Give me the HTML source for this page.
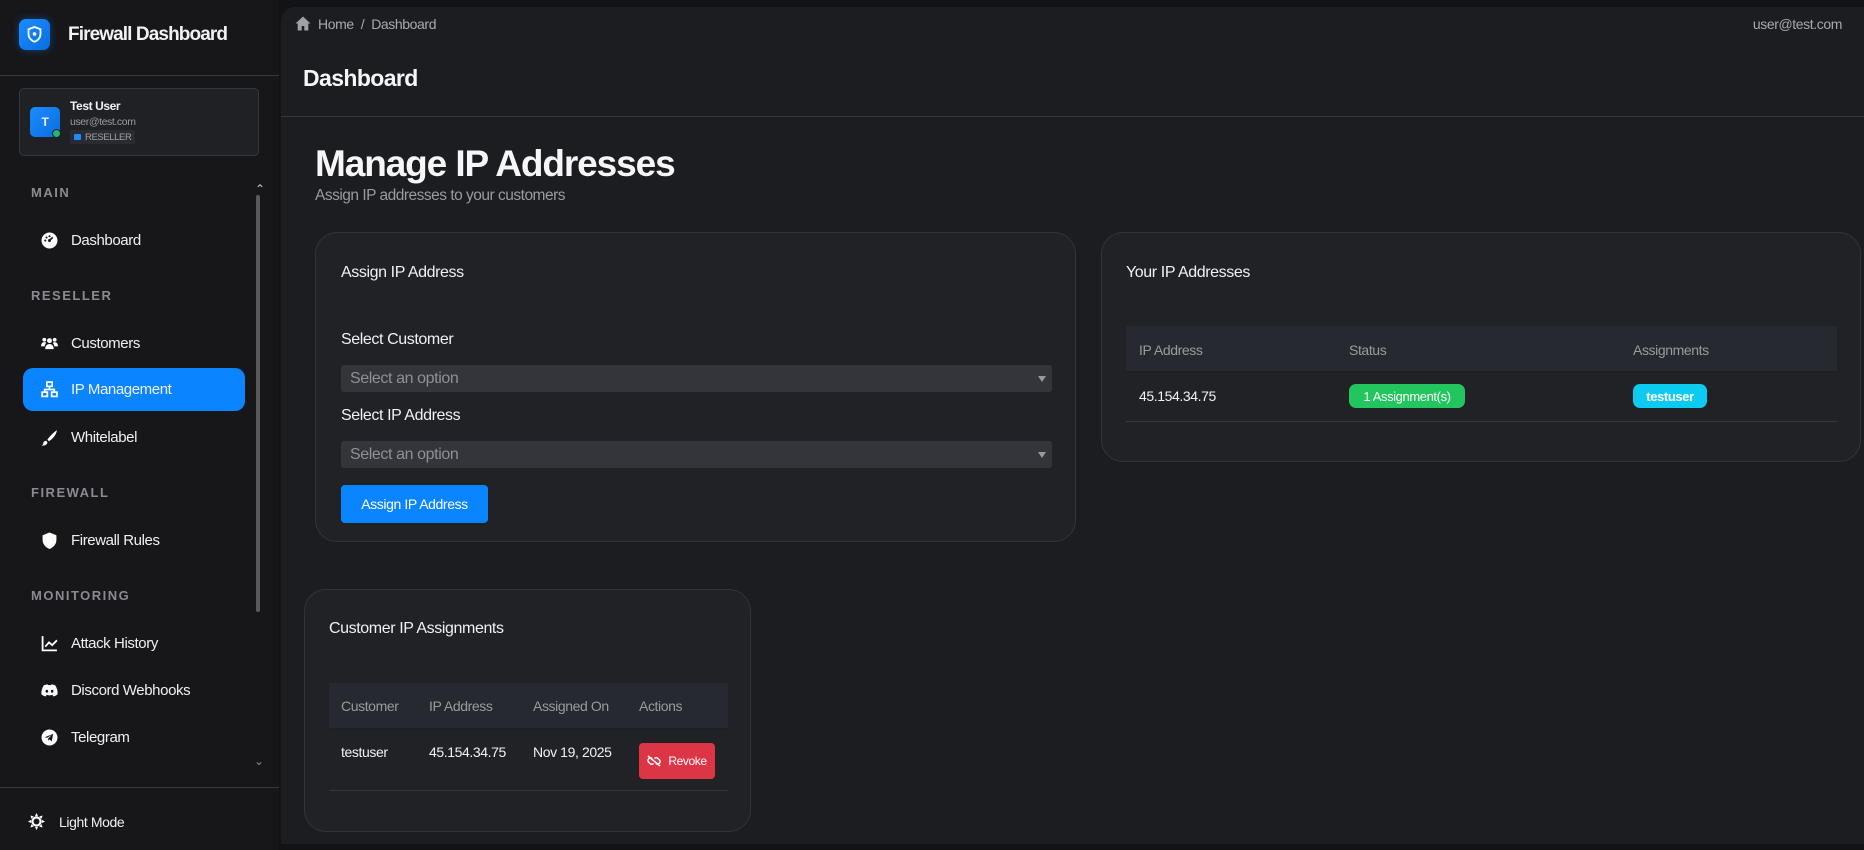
<!DOCTYPE html>
<html><head><meta charset="utf-8"><style>
*{box-sizing:border-box;margin:0;padding:0}
body{width:1864px;height:850px;background:#131316;font-family:"Liberation Sans",sans-serif;color:#f1f1f3;position:relative;overflow:hidden;letter-spacing:-0.4px}
.a{position:absolute}
#side{left:0;top:0;width:279px;height:850px;background:#17171a}
.sep{height:1px;background:#36373c}
.lbl{left:31px;font-size:13px;font-weight:700;letter-spacing:1.5px;color:#8a8a90}
.nav{left:23px;width:222px;height:43px;display:flex;align-items:center;font-size:15px;color:#f0f0f2}
.nav svg{margin-left:18px;margin-right:13px;width:17px;height:17px}
#main{left:281px;top:7px;width:1583px;height:837px;background:#1c1d21;border-radius:14px 0 0 0}
.card{background:#212226;border:1px solid #33343a;border-radius:22px}
.sel{background:#34353b;border-radius:3px;font-size:16px;color:#8f8f95;padding-left:9px;display:flex;align-items:center}
.sel:after{content:"";position:absolute;right:6px;top:11px;border:4px solid transparent;border-top:6px solid #999}
.th{background:#272931;border-bottom:2px solid #1f2024}
.hd{font-size:14px;color:#9a9aa0}
.td{font-size:14px;color:#f1f1f3}
</style></head><body>
<div id="side" class="a">
  <div class="a" style="left:19px;top:19px;width:31px;height:31px;border-radius:7px;background:linear-gradient(135deg,#1a8cff,#0a6ee0);box-shadow:0 0 8px rgba(10,132,255,.4)">
    <svg width="31" height="31" viewBox="0 0 31 31"><path d="M15.5 8l6 2.3v4.5c0 4-2.6 6.8-6 8-3.4-1.2-6-4-6-8v-4.5z" fill="none" stroke="#fff" stroke-width="1.8"/><circle cx="15.5" cy="15" r="1.8" fill="#fff"/></svg>
  </div>
  <div class="a" style="left:68px;top:24px;font-size:19px;font-weight:700;letter-spacing:-0.9px">Firewall Dashboard</div>
  <div class="a sep" style="left:0;top:75px;width:279px"></div>
  <div class="a" style="left:19px;top:88px;width:240px;height:68px;background:#202125;border:1px solid #36373c;border-radius:5px">
    <div class="a" style="left:10px;top:18px;width:30px;height:30px;border-radius:5px;background:linear-gradient(135deg,#1a8cff,#0a6ee0);font-size:12px;font-weight:700;display:flex;align-items:center;justify-content:center">T</div>
    <div class="a" style="left:32px;top:40px;width:9px;height:9px;border-radius:50%;background:#22b573;border:1px solid #202125"></div>
    <div class="a" style="left:50px;top:10px;font-size:12px;font-weight:700">Test User</div>
    <div class="a" style="left:50px;top:27px;font-size:10.5px;color:#9a9aa0">user@test.com</div>
    <div class="a" style="left:50px;top:41px;height:14px;padding:0 4px;background:#2a2b31;border-radius:2px;font-size:9.5px;color:#a0a0a6;display:flex;align-items:center"><span style="display:inline-block;width:7px;height:6px;background:#1a8cff;margin-right:4px;border-radius:1px"></span>RESELLER</div>
  </div>
  <div class="a" style="left:255px;top:182px;font-size:12px;color:#ccc">&#8963;</div>
  <div class="a" style="left:256px;top:195px;width:4px;height:417px;background:#5a5a5e;border-radius:2px"></div>
  <div class="a" style="left:254px;top:754px;font-size:12px;color:#888">&#8964;</div>
  <div class="a lbl" style="top:185px">MAIN</div>
  <div class="a nav" style="top:219px"><svg viewBox="0 0 16 16"><circle cx="8" cy="8" r="7.5" fill="#fff"/><path d="M8 8l3-3" stroke="#17171a" stroke-width="1.6"/><circle cx="8" cy="8" r="1.4" fill="#17171a"/><circle cx="4" cy="8" r="1" fill="#17171a"/><circle cx="8" cy="4" r="1" fill="#17171a"/><circle cx="5.2" cy="5.2" r="1" fill="#17171a"/></svg>Dashboard</div>
  <div class="a lbl" style="top:288px">RESELLER</div>
  <div class="a nav" style="top:322px"><svg viewBox="0 0 18 16"><circle cx="9" cy="5" r="2.6" fill="#fff"/><circle cx="3.5" cy="4" r="2" fill="#fff"/><circle cx="14.5" cy="4" r="2" fill="#fff"/><path d="M4.5 14c0-3.5 2-5.5 4.5-5.5s4.5 2 4.5 5.5zM0 11c0-3 1.5-4.5 3.5-4.5 1 0 1.6.3 2 .7C4.5 8.5 4 10 4 11zM18 11c0-3-1.5-4.5-3.5-4.5-1 0-1.6.3-2 .7 1 1.3 1.5 2.8 1.5 3.8z" fill="#fff"/></svg>Customers</div>
  <div class="a nav" style="top:368px;background:#0a84ff;border-radius:10px"><svg viewBox="0 0 16 16" fill="none" stroke="#fff" stroke-width="1.6"><rect x="5.5" y="1" width="5" height="4"/><rect x="1" y="10.5" width="5" height="4"/><rect x="10" y="10.5" width="5" height="4"/><path d="M8 5v3M3.5 10.5V8h9v2.5"/></svg>IP Management</div>
  <div class="a nav" style="top:416px"><svg viewBox="0 0 16 16"><path d="M15 1c-3 2-7 6-9 9l1.5 1.5c3-2 7-6 7.5-10.5zM5 11c-2 0-3 1.5-3 3-.3 1-1 1.5-2 1.5 3 .5 6-.5 6-3z" fill="#fff"/></svg>Whitelabel</div>
  <div class="a lbl" style="top:485px">FIREWALL</div>
  <div class="a nav" style="top:519px"><svg viewBox="0 0 16 16"><path d="M8 .5l6.5 2.5v4.5c0 4-3 7-6.5 8.5C4.5 14.5 1.5 11.5 1.5 7.5V3z" fill="#fff"/></svg>Firewall Rules</div>
  <div class="a lbl" style="top:588px">MONITORING</div>
  <div class="a nav" style="top:622px"><svg viewBox="0 0 16 16" fill="none" stroke="#fff" stroke-width="1.7"><path d="M1.5 1v13.5H15M4 11l3.5-4 3 2.5L15 5"/></svg>Attack History</div>
  <div class="a nav" style="top:669px"><svg viewBox="0 0 18 14"><path d="M3 1.5C5 .8 6.5.5 7 .5l.4.8h3.2l.4-.8c.5 0 2 .3 4 1 1.8 2.8 2.8 6 2.6 9.5-1.6 1.3-3.2 2-4.5 2.3l-1-1.5c.6-.2 1.2-.5 1.7-.9-3.4 1.6-6.2 1.6-9.6 0 .5.4 1.1.7 1.7.9l-1 1.5C3.6 13 2 12.3.4 11 .2 7.5 1.2 4.3 3 1.5z" fill="#fff"/><ellipse cx="6.2" cy="7.8" rx="1.4" ry="1.6" fill="#17171a"/><ellipse cx="11.8" cy="7.8" rx="1.4" ry="1.6" fill="#17171a"/></svg>Discord Webhooks</div>
  <div class="a nav" style="top:716px"><svg viewBox="0 0 16 16"><circle cx="8" cy="8" r="7.5" fill="#fff"/><path d="M3.5 7.8l8-3.2-1.4 7-2.3-1.8-1.2 1.2.2-2.2 3.5-3.3-4.5 2.7z" fill="#17171a"/></svg>Telegram</div>
  <div class="a sep" style="left:0;top:787px;width:279px"></div>
  <div class="a" style="left:28px;top:813px;width:17px;height:17px"><svg viewBox="0 0 16 16" width="17" height="17"><g fill="#fff"><circle cx="8" cy="8" r="4.8"/><path d="M8 0l1.5 3h-3zM8 16l-1.5-3h3zM0 8l3-1.5v3zM16 8l-3 1.5v-3zM2.3 2.3l3.2 1-2.2 2.2zM13.7 13.7l-3.2-1 2.2-2.2zM13.7 2.3l-1 3.2-2.2-2.2zM2.3 13.7l1-3.2 2.2 2.2z"/></g><circle cx="8" cy="8" r="2.8" fill="#17171a"/></svg></div>
  <div class="a" style="left:59px;top:814px;font-size:14px;color:#f0f0f2">Light Mode</div>
</div>

<div id="main" class="a">
  <svg class="a" style="left:14px;top:9px" width="16" height="15" viewBox="0 0 16 15"><path d="M8 .5L.5 7.5h2.2V14.5h4V10h2.6v4.5h4V7.5h2.2z" fill="#a0a0a6"/></svg>
  <div class="a" style="left:37px;top:9px;font-size:14px;color:#a8a8ae">Home &nbsp;/&nbsp; Dashboard</div>
  <div class="a" style="right:22px;top:9px;font-size:14px;color:#a8a8ae">user@test.com</div>
  <div class="a" style="left:22px;top:58px;font-size:23px;font-weight:700;color:#f6f6f8;letter-spacing:-0.6px">Dashboard</div>
  <div class="a sep" style="left:0;top:109px;width:1583px"></div>
  <div class="a" style="left:34px;top:136px;font-size:37px;font-weight:700;color:#f6f6f8;letter-spacing:-1.1px">Manage IP Addresses</div>
  <div class="a" style="left:34px;top:180px;font-size:15.5px;color:#9a9aa0;letter-spacing:-0.5px">Assign IP addresses to your customers</div>

  <div class="a card" style="left:34px;top:225px;width:761px;height:310px">
    <div class="a" style="left:25px;top:31px;font-size:16px">Assign IP Address</div>
    <div class="a" style="left:25px;top:98px;font-size:16px">Select Customer</div>
    <div class="a sel" style="left:25px;top:132px;width:711px;height:27px">Select an option</div>
    <div class="a" style="left:25px;top:174px;font-size:16px">Select IP Address</div>
    <div class="a sel" style="left:25px;top:208px;width:711px;height:27px">Select an option</div>
    <div class="a" style="left:25px;top:252px;width:147px;height:38px;background:#0a84ff;border-radius:4px;font-size:14px;display:flex;align-items:center;justify-content:center;color:#fff">Assign IP Address</div>
  </div>

  <div class="a card" style="left:820px;top:225px;width:760px;height:230px">
    <div class="a" style="left:24px;top:31px;font-size:16px">Your IP Addresses</div>
    <div class="a th" style="left:24px;top:93px;width:711px;height:47px"></div>
    <div class="a hd" style="left:37px;top:109px">IP Address</div>
    <div class="a hd" style="left:247px;top:109px">Status</div>
    <div class="a hd" style="left:531px;top:109px">Assignments</div>
    <div class="a td" style="left:37px;top:155px">45.154.34.75</div>
    <div class="a" style="left:247px;top:151px;width:116px;height:24px;background:#22c55e;border-radius:7px;font-size:13px;color:#fff;display:flex;align-items:center;justify-content:center">1 Assignment(s)</div>
    <div class="a" style="left:531px;top:151px;width:74px;height:24px;background:#0dcaf0;border-radius:7px;font-size:13px;font-weight:700;color:#fff;display:flex;align-items:center;justify-content:center">testuser</div>
    <div class="a sep" style="left:24px;top:188px;width:711px"></div>
  </div>

  <div class="a card" style="left:23px;top:582px;width:447px;height:243px">
    <div class="a" style="left:24px;top:30px;font-size:16px">Customer IP Assignments</div>
    <div class="a th" style="left:24px;top:93px;width:399px;height:47px"></div>
    <div class="a hd" style="left:36px;top:108px">Customer</div>
    <div class="a hd" style="left:124px;top:108px">IP Address</div>
    <div class="a hd" style="left:228px;top:108px">Assigned On</div>
    <div class="a hd" style="left:334px;top:108px">Actions</div>
    <div class="a td" style="left:36px;top:154px">testuser</div>
    <div class="a td" style="left:124px;top:154px">45.154.34.75</div>
    <div class="a td" style="left:228px;top:154px">Nov 19, 2025</div>
    <div class="a" style="left:334px;top:153px;width:76px;height:36px;background:#dc3545;border-radius:4px;font-size:12px;color:#fff;display:flex;align-items:center;justify-content:center"><svg width="14" height="12" viewBox="0 0 14 12" style="margin-right:7px" fill="none" stroke="#fff" stroke-width="1.5"><path d="M5 3.5a2.5 2.5 0 00-3.5 3.5l1.5 1.5a2.5 2.5 0 003.5 0M9 8.5a2.5 2.5 0 003.5-3.5L11 3.5a2.5 2.5 0 00-3.5 0M1 1l12 10"/></svg>Revoke</div>
    <div class="a sep" style="left:24px;top:200px;width:399px"></div>
  </div>
</div>
</body></html>
